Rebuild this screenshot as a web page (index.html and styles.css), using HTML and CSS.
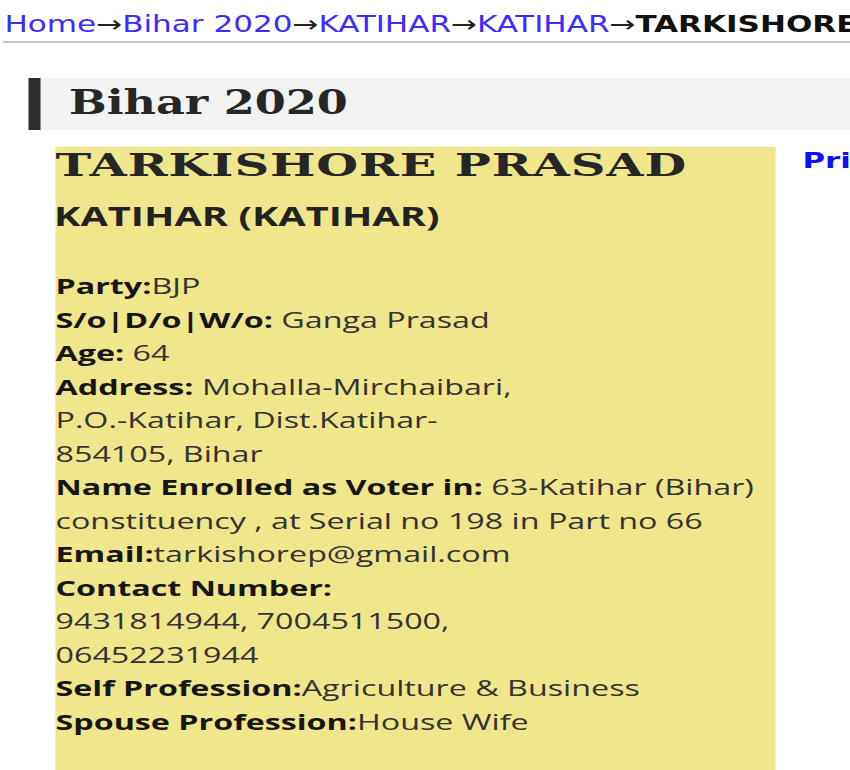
FILE: index.html
```html
<!DOCTYPE html>
<html lang='en'>
<head>
  <meta charset='UTF-8'>
  <meta name='viewport' content='width=device-width, initial-scale=1'>
  <title>TARKISHORE PRASAD - Bihar 2020</title>
  <link rel="stylesheet" href="styles.css">
</head>
<body>
  <div class="sheet">
    <div class="crumbs">
      <a href="#">Home</a>&rarr;<a href="#">Bihar 2020</a>&rarr;<a href="#">KATIHAR</a>&rarr;<a href="#">KATIHAR</a>&rarr;<b>TARKISHORE PRASAD</b>
    </div>
    <div class="page">
      <h2 class="title">Bihar 2020</h2>
      <div class="row">
        <div class="candidate">
          <h2 class="name">TARKISHORE PRASAD</h2>
          <h5 class="seat">KATIHAR (KATIHAR)</h5>
          <div class="details">
            <b>Party:</b>BJP<br>
            <b>S/o|D/o|W/o:</b> Ganga Prasad<br>
            <b>Age:</b> 64<br>
            <b>Address:</b> Mohalla-Mirchaibari,<br>P.O.-Katihar, Dist.Katihar-<br>854105, Bihar<br>
            <b>Name Enrolled as Voter in:</b> 63-Katihar (Bihar) constituency , at Serial no 198 in Part no 66<br>
            <b>Email:</b>tarkishorep@gmail.com<br>
            <b>Contact Number:</b><br>9431814944, 7004511500,<br>06452231944<br>
            <b>Self Profession:</b>Agriculture &amp; Business<br>
            <b>Spouse Profession:</b>House Wife
          </div>
        </div>
        <div class="side">
          <a class="print" href="#">Print Profile</a>
        </div>
      </div>
    </div>
  </div>
</body>
</html>
```

FILE: styles.css
```css
html, body {
  overflow: hidden;
}
body {
  margin: 0;
  padding: 0;
  background-color: #fff;
  font-family: "Open Sans", sans-serif;
  color: #333;
}
a {
  color: #3c2cff;
  text-decoration: none;
}
/* the whole sheet is drawn wide: 567px of layout stretched to 850px */
.sheet {
  width: 567px;
  transform: scaleX(1.5);
  transform-origin: 0 0;
}
.crumbs {
  margin: 0 0 0 2px;
  padding: 9px 0 2px 1px;
  font-family: "DejaVu Sans Condensed", "DejaVu Sans", sans-serif;
  font-size: 23px;
  line-height: 30px;
  color: #222;
  white-space: nowrap;
  border-bottom: 2px solid #c8c8c8;
}
.crumbs b {
  color: #111;
}
.page {
  margin: 35px 0 0 19px;
}
.title {
  margin: 0;
  padding: 0 0 0 19px;
  height: 52px;
  line-height: 50px;
  background-color: #f2f2f2;
  border-left: 8px solid #2e2e2e;
  font-family: "DejaVu Serif Condensed", "DejaVu Serif", serif;
  font-size: 33px;
  font-weight: bold;
  color: #262626;
}
.row {
  display: flex;
  margin-top: 17px;
}
.candidate {
  flex: none;
  margin-left: 18px;
  width: 480px;
  min-height: 640px;
  background-color: #f0e68c;
}
.name {
  margin: 0;
  font-family: "DejaVu Serif", serif;
  font-size: 32px;
  line-height: 36px;
  letter-spacing: 0.6px;
  white-space: nowrap;
  color: #262626;
}
.seat {
  margin: 16px 0 0 -1px;
  font-size: 26.5px;
  line-height: 34px;
  font-weight: bold;
  color: #222;
}
.details {
  margin-top: 36px;
  font-size: 21.5px;
  line-height: 33.5px;
}
.details b {
  color: #161616;
}
.side {
  flex: none;
  margin-left: 18px;
  padding-top: 2px;
  white-space: nowrap;
}
.print {
  font-family: "DejaVu Sans", sans-serif;
  font-size: 20.5px;
  line-height: 24px;
  font-weight: bold;
  color: #1010ff;
}
```
